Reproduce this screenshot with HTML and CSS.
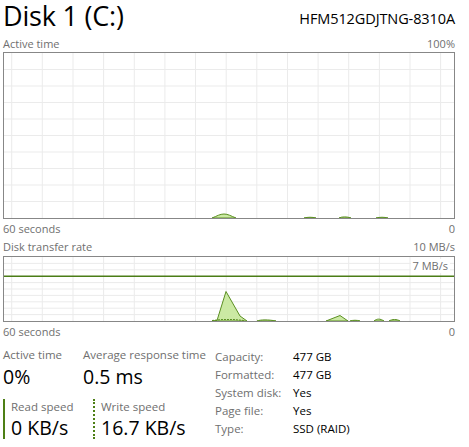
FILE: index.html
```html
<!DOCTYPE html>
<html>
<head>
<meta charset="utf-8">
<link rel="stylesheet" href="styles.css">
</head>
<body>
<div class="page">
  <div class="header">
    <div class="title">Disk 1 (C:)</div>
    <div class="model">HFM512GDJTNG-8310A</div>
  </div>
  <div class="axis-row top"><span>Active time</span><span>100%</span></div>
  <div class="chart chart-big">
    <svg width="450" height="165" viewBox="0 0 450 165">
      <g class="grid">
        <path d="M7.7 0V165M38.3 0V165M69 0V165M99.6 0V165M130.3 0V165M160.9 0V165M191.5 0V165M222.2 0V165M252.8 0V165M283.5 0V165M314.1 0V165M344.7 0V165M375.4 0V165M406 0V165M436.6 0V165"/>
        <path d="M0 16.5H450M0 33H450M0 49.5H450M0 66H450M0 82.5H450M0 99H450M0 115.5H450M0 132H450M0 148.5H450"/>
      </g>
      <path class="area" d="M208 165 C213 163 216 161 220 161 C224 161 227 163 232 165 Z"/>
      <path class="area" d="M300 165 C304 164 308 164 312 165 Z"/>
      <path class="area" d="M335 165 C338 163.5 343 163.5 347 165 Z"/>
      <path class="area" d="M372 165 C376 164 380 164 384 165 Z"/>
    </svg>
  </div>
  <div class="axis-row"><span>60 seconds</span><span>0</span></div>
  <div class="axis-row second"><span>Disk transfer rate</span><span>10 MB/s</span></div>
  <div class="chart chart-small">
    <svg width="450" height="64" viewBox="0 0 450 64">
      <g class="grid">
        <path d="M7.7 0V64M38.3 0V64M69 0V64M99.6 0V64M130.3 0V64M160.9 0V64M191.5 0V64M222.2 0V64M252.8 0V64M283.5 0V64M314.1 0V64M344.7 0V64M375.4 0V64M406 0V64M436.6 0V64"/>
        <path d="M0 6.4H450M0 12.8H450M0 25.6H450M0 32H450M0 38.4H450M0 44.8H450M0 51.2H450M0 57.6H450"/>
      </g>
      <path class="scale" d="M0 19.2H450"/>
      <path class="area" d="M208 64 L213 63.5 L222 34.5 L236 59 L243 64 Z"/>
      <path class="area" d="M253 64 C257 62.5 264 62.5 272 64 Z"/>
      <path class="area" d="M322 64 L336 58.5 L344 64 Z"/>
      <path class="area" d="M346 64 C349 63 353 63 356 64 Z"/>
      <path class="area" d="M370 64 C373 61.5 376 61.5 380 64 Z"/>
      <path class="area" d="M385 64 C388 62 393 62 396 64 Z"/>
      <path class="dash" d="M208 63.5 L218 62.5 L230 62.5 L240 63.5"/>
    </svg>
    <div class="scale-label">7 MB/s</div>
  </div>
  <div class="axis-row"><span>60 seconds</span><span>0</span></div>

  <div class="stats">
    <div class="stats-left">
      <div class="stat-row">
        <div class="stat stat-active">
          <div class="stat-label">Active time</div>
          <div class="stat-value">0%</div>
        </div>
        <div class="stat">
          <div class="stat-label">Average response time</div>
          <div class="stat-value">0.5 ms</div>
        </div>
      </div>
      <div class="stat-row speeds">
        <div class="stat speed read">
          <div class="stat-label">Read speed</div>
          <div class="stat-value">0 KB/s</div>
        </div>
        <div class="stat speed write">
          <div class="stat-label">Write speed</div>
          <div class="stat-value">16.7 KB/s</div>
        </div>
      </div>
    </div>
    <div class="props">
      <div class="prop-label">Capacity:</div><div class="prop-value">477 GB</div>
      <div class="prop-label">Formatted:</div><div class="prop-value">477 GB</div>
      <div class="prop-label">System disk:</div><div class="prop-value">Yes</div>
      <div class="prop-label">Page file:</div><div class="prop-value">Yes</div>
      <div class="prop-label">Type:</div><div class="prop-value">SSD (RAID)</div>
    </div>
  </div>
</div>
</body>
</html>
```
FILE: styles.css
```css
html, body {
  margin: 0;
  padding: 0;
  background: #ffffff;
}
body {
  font-family: "Open Sans", "Noto Sans", "Liberation Sans", sans-serif;
  color: #000;
}
.page {
  width: 452px;
  padding: 0 0 0 3px;
}
.header {
  display: flex;
  justify-content: space-between;
  align-items: flex-start;
  height: 36px;
}
.title {
  font-size: 27px;
  font-weight: 400;
  line-height: 31px;
  letter-spacing: -0.2px;
}
.model {
  font-size: 14.5px;
  line-height: 20px;
  padding-top: 9px;
  letter-spacing: -0.1px;
}
.axis-row {
  display: flex;
  justify-content: space-between;
  font-size: 11px;
  line-height: 16px;
  color: #6f6f6f;
  height: 16px;
  padding-top: 2px;
}
.axis-row.top {
  padding-top: 0;
}
.axis-row.second {
  height: 17px;
}
.chart {
  position: relative;
  border: 1px solid #878787;
  width: 450px;
}
.chart svg {
  display: block;
}
.chart-big {
  height: 165px;
}
.chart-small {
  height: 64px;
}
.grid path {
  stroke: #ebebeb;
  stroke-width: 1;
  fill: none;
}
.scale {
  stroke: #4b7d16;
  stroke-width: 1.5;
  fill: none;
}
.area {
  fill: #cbe9a3;
  stroke: #5b8f22;
  stroke-width: 1;
}
.dash {
  fill: none;
  stroke: #5b8f22;
  stroke-width: 1;
  stroke-dasharray: 2 1;
}
.scale-label {
  position: absolute;
  right: 4px;
  top: 2px;
  font-size: 11px;
  line-height: 14px;
  color: #6f6f6f;
  background: #fff;
  padding: 0 2px;
}
.stats {
  display: flex;
  margin-top: 7px;
}
.stats-left {
  width: 212px;
}
.stat-row {
  display: flex;
}
.stat-label {
  font-size: 11.5px;
  line-height: 16px;
  color: #6f6f6f;
  white-space: nowrap;
}
.stat-value {
  font-size: 19.5px;
  line-height: 28px;
}
.stat-active {
  width: 80px;
}
.speeds {
  margin-top: 8px;
}
.speed {
  padding-left: 6px;
  height: 40px;
}
.speed .stat-value {
  line-height: 26px;
}
.read {
  width: 82px;
  border-left: 2px solid #4d7f15;
}
.write {
  border-left: 2px dotted #4d7f15;
}
.props {
  display: grid;
  grid-template-columns: 78px auto;
  grid-auto-rows: 18px;
  font-size: 11.5px;
  line-height: 18px;
  margin-top: 1px;
}
.prop-label {
  color: #6f6f6f;
}
```
